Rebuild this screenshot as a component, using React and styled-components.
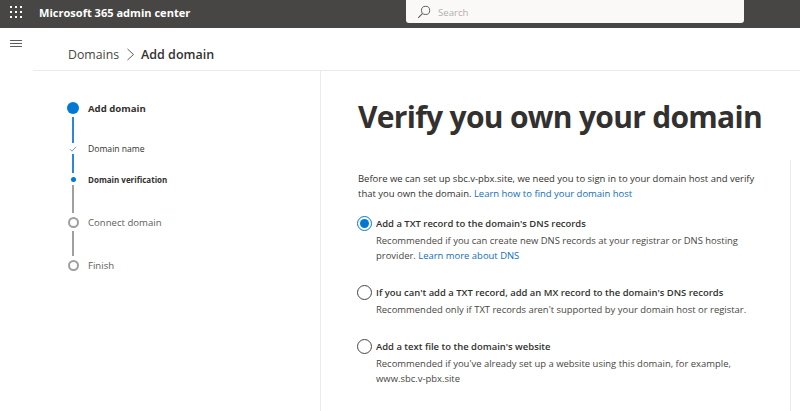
import React from 'react';
import styled, {createGlobalStyle} from 'styled-components';

const font = `"Open Sans", "Noto Sans", "Liberation Sans", sans-serif`

const GlobalStyle = createGlobalStyle`
    html, body {
        margin: 0;
        padding: 0;
        background: #fff;
        overflow: hidden;
    }
    body {
        font-family: ${font};
        color: #323130;
    }
    * { box-sizing: border-box; }
`

const steps = [
    {id: 'add', label: 'Add domain', marker: 'big', state: 'main', line: {color: 'blue', top: 5, h: 26, bottom: 2}},
    {id: 'name', label: 'Domain name', marker: 'check', state: 'sub', line: {color: 'blue', top: 1, h: 19, bottom: 2}},
    {id: 'verify', label: 'Domain verification', marker: 'dot', state: 'subActive', line: {color: 'gray', top: 2, h: 28, bottom: 5}},
    {id: 'connect', label: 'Connect domain', marker: 'ring', state: 'todo', line: {color: 'gray', top: 5, h: 25, bottom: 5}},
    {id: 'finish', label: 'Finish', marker: 'ring', state: 'todo'},
]

const options = [
    {
        id: 'txt',
        title: "Add a TXT record to the domain's DNS records",
        checked: true,
        text: 'Recommended if you can create new DNS records at your registrar or DNS hosting provider. ',
        link: 'Learn more about DNS',
    },
    {
        id: 'mx',
        title: "If you can't add a TXT record, add an MX record to the domain's DNS records",
        text: "Recommended only if TXT records aren't supported by your domain host or registar.",
    },
    {
        id: 'file',
        title: "Add a text file to the domain's website",
        text: "Recommended if you've already set up a website using this domain, for example, www.sbc.v-pbx.site",
    },
]

function Marker({type}) {
    if (type === 'check') {
        return (
            <svg width="8" height="8" viewBox="0 0 8 8" fill="none">
                <path d="M1 4.2 L3 6.2 L7 1.8" stroke="#5ba3e0" strokeWidth="1"/>
            </svg>
        )
    }
    if (type === 'big') return <BigDot/>
    if (type === 'dot') return <SmallDot/>
    return <Ring/>
}

function App() {
    return (
        <Page>
            <GlobalStyle/>
            <Header>
                <Waffle>
                    {Array.from({length: 9}).map((_, i) => <i key={i}/>)}
                </Waffle>
                <Brand>Microsoft 365 admin center</Brand>
                <SearchBox>
                    <svg width="14" height="14" viewBox="0 0 14 14" fill="none">
                        <circle cx="8.6" cy="5.4" r="4.1" stroke="#605e5c" strokeWidth="1"/>
                        <path d="M5.6 8.4 L1.2 12.8" stroke="#605e5c" strokeWidth="1.1"/>
                    </svg>
                    <SearchText>Search</SearchText>
                </SearchBox>
            </Header>
            <Body>
                <Rail>
                    <Burger><i/><i/><i/></Burger>
                </Rail>
                <Main>
                    <Crumbs>
                        <Crumb>Domains</Crumb>
                        <Chevron width="9" height="13" viewBox="0 0 9 13" fill="none">
                            <path d="M1.5 1 L7.5 6.5 L1.5 12" stroke="#605e5c" strokeWidth="1"/>
                        </Chevron>
                        <CrumbCurrent>Add domain</CrumbCurrent>
                    </Crumbs>
                    <Columns>
                        <Stepper>
                            {steps.map(step => (
                                <React.Fragment key={step.id}>
                                    <Step>
                                        <MarkerBox><Marker type={step.marker}/></MarkerBox>
                                        <StepLabel $state={step.state}>{step.label}</StepLabel>
                                    </Step>
                                    {step.line && <Line $color={step.line.color} $top={step.line.top} $h={step.line.h} $bottom={step.line.bottom}/>}
                                </React.Fragment>
                            ))}
                        </Stepper>
                        <Content>
                            <Title>Verify you own your domain</Title>
                            <BodyArea>
                                <Intro>
                                    Before we can set up sbc.v-pbx.site, we need you to sign in to your domain host and verify that you own the domain. <Link>Learn how to find your domain host</Link>
                                </Intro>
                                <Options>
                                    {options.map(option => (
                                        <Option key={option.id}>
                                            <OptionHead>
                                                <Radio $checked={option.checked}/>
                                                <OptionTitle>{option.title}</OptionTitle>
                                            </OptionHead>
                                            <OptionText>
                                                {option.text}
                                                {option.link && <Link>{option.link}</Link>}
                                            </OptionText>
                                        </Option>
                                    ))}
                                </Options>
                            </BodyArea>
                        </Content>
                    </Columns>
                </Main>
            </Body>
        </Page>
    );
}

const Page = styled.div`
    width: 800px;
    height: 411px;
    overflow: hidden;
    display: flex;
    flex-direction: column;
`
const Header = styled.header`
    height: 28px;
    flex: none;
    background: #484644;
    display: flex;
    align-items: center;
    padding-bottom: 4px;
    position: relative;
`
const Waffle = styled.div`
    width: 12px;
    margin-left: 10px;
    display: grid;
    grid-template-columns: repeat(3, 2px);
    gap: 3px;
    i {
        width: 2px;
        height: 2px;
        background: #fff;
    }
`
const Brand = styled.div`
    margin-left: 17px;
    color: #fff;
    font-size: 11.05px;
    font-weight: 700;
    white-space: nowrap;
`
const SearchBox = styled.div`
    position: absolute;
    left: 406px;
    top: 0;
    width: 338px;
    height: 23px;
    background: #faf9f8;
    border-radius: 0 0 3px 3px;
    display: flex;
    align-items: center;
    padding-left: 11px;
    gap: 7px;
`
const SearchText = styled.span`
    font-size: 9.6px;
    line-height: 13px;
    padding-top: 2px;
    color: #b3b0ad;
`
const Body = styled.div`
    flex: 1;
    display: flex;
    min-height: 0;
`
const Rail = styled.nav`
    width: 33px;
    flex: none;
    padding: 12px 0 0 10px;
`
const Burger = styled.div`
    width: 12px;
    display: flex;
    flex-direction: column;
    gap: 2px;
    i {
        height: 1px;
        background: #605e5c;
    }
`
const Main = styled.main`
    flex: 1;
    display: flex;
    flex-direction: column;
    min-width: 0;
`
const Crumbs = styled.div`
    height: 43px;
    flex: none;
    border-bottom: 1px solid #edebe9;
    display: flex;
    align-items: center;
    padding: 11px 0 0 35px;
`
const Crumb = styled.span`
    font-size: 12.3px;
    color: #484644;
`
const Chevron = styled.svg`
    margin: 0 6px 0 7px;
    flex: none;
`
const CrumbCurrent = styled.span`
    font-size: 12.5px;
    font-weight: 600;
    color: #323130;
`
const Columns = styled.div`
    flex: 1;
    display: flex;
    min-height: 0;
`
const Stepper = styled.div`
    width: 288px;
    flex: none;
    border-right: 1px solid #edebe9;
    padding: 33px 0 0 34px;
    display: flex;
    flex-direction: column;
    align-items: flex-start;
`
const Step = styled.div`
    display: flex;
    align-items: center;
    height: 8px;
`
const MarkerBox = styled.div`
    width: 12px;
    display: flex;
    align-items: center;
    justify-content: center;
    flex: none;
`
const BigDot = styled.span`
    width: 12px;
    height: 12px;
    flex: none;
    border-radius: 50%;
    background: #0078d4;
`
const SmallDot = styled.span`
    width: 5px;
    height: 5px;
    flex: none;
    border-radius: 50%;
    background: #0078d4;
`
const Ring = styled.span`
    width: 11px;
    height: 11px;
    flex: none;
    border-radius: 50%;
    border: 2px solid #a19f9d;
`
const Line = styled.div`
    width: 2px;
    height: ${p => p.$h}px;
    margin: ${p => p.$top}px 0 ${p => p.$bottom}px 5px;
    background: ${p => (p.$color === 'blue' ? '#2b88d8' : '#a19f9d')};
`
const StepLabel = styled.span`
    margin-left: 9px;
    white-space: nowrap;
    color: ${p => (p.$state === 'todo' ? '#605e5c' : '#323130')};
    font-size: ${p => (p.$state === 'sub' ? 8.6 : p.$state === 'subActive' ? 8 : 9.6)}px;
    font-weight: ${p => (p.$state === 'main' || p.$state === 'subActive' ? 700 : 400)};
`
const Content = styled.section`
    flex: 1;
    min-width: 0;
    padding: 25px 0 0 37px;
    display: flex;
    flex-direction: column;
`
const Title = styled.h1`
    margin: 0;
    font-size: 30px;
    line-height: 42px;
    font-weight: 700;
    letter-spacing: -0.7px;
    color: #323130;
    white-space: nowrap;
`
const BodyArea = styled.div`
    flex: 1;
    margin: 22px 0 0 0;
    width: 433px;
    border-right: 1px solid #edebe9;
    padding: 10.5px 0 0 0;
`
const Intro = styled.p`
    margin: 0;
    width: 410px;
    font-size: 9.48px;
    line-height: 15px;
    color: #323130;
`
const Link = styled.span`
    color: #106ebe;
`
const Options = styled.div`
    margin-top: 15px;
    display: flex;
    flex-direction: column;
    gap: 22px;
`
const Option = styled.div`
    display: flex;
    flex-direction: column;
`
const OptionHead = styled.div`
    display: flex;
    align-items: center;
    height: 15px;
    gap: 4px;
`
const Radio = styled.span`
    width: 15px;
    height: 15px;
    margin-left: -1px;
    flex: none;
    border-radius: 50%;
    border: 1px solid ${p => (p.$checked ? '#0078d4' : '#484644')};
    display: flex;
    align-items: center;
    justify-content: center;
    &::after {
        content: '';
        width: 9px;
        height: 9px;
        border-radius: 50%;
        background: ${p => (p.$checked ? '#0078d4' : 'transparent')};
    }
`
const OptionTitle = styled.span`
    font-size: 9.45px;
    font-weight: 600;
    color: #323130;
    white-space: nowrap;
`
const OptionText = styled.p`
    margin: 2px 0 0 18px;
    width: 395px;
    font-size: 9.45px;
    line-height: 15px;
    color: #484644;
`

export default App;
